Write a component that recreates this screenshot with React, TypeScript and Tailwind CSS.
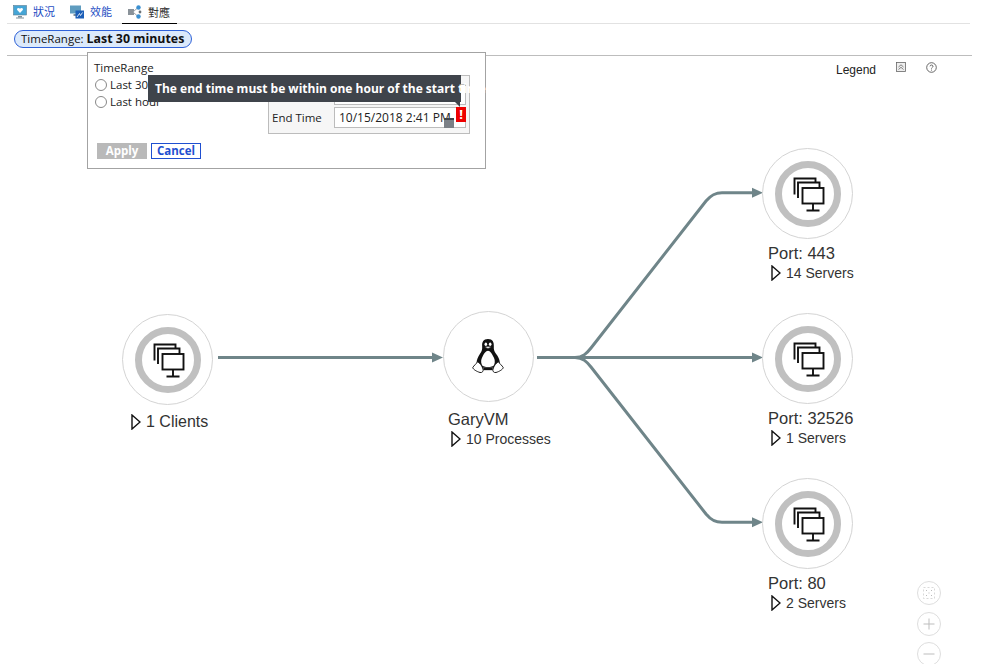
import React from "react";

const sans = "font-['Liberation_Sans',Arial,sans-serif]";

function MonitorsIcon() {
    return (
        <svg width="42" height="42" viewBox="0 0 42 42" fill="none" stroke="#111" strokeWidth="1.9">
            <path d="M7.5 21.5 V5.5 H28.5 V9.5" />
            <path d="M11 25 V9.5 H32.5 V15" />
            <rect x="15.5" y="15" width="21" height="15.5" fill="#fff" />
            <path d="M26 30.5 V37.5 M19.5 37.5 H32.5" />
        </svg>
    );
}

function Tux() {
    return (
        <svg width="32" height="37" viewBox="0 0 34 38" className="mr-[2px]">
            <path d="M17 0.5 C12 0.5 10.5 4 10.8 8 C11 11.5 10.5 13 8.5 16 C6.2 19.5 4.6 23 5 26 L8 31 L26 31 L29.5 26 C29.8 23 27.6 18.5 25.5 16 C23.5 13.5 23 11.5 23.2 8 C23.4 4 22 0.5 17 0.5 Z" fill="#111" />
            <path d="M17 13 C14.5 13.5 13 15.5 11.5 18.5 C9.8 21.5 9 24.5 10.5 28 C12.5 31 21.5 31 23.5 28 C25 24.5 24 21 22.3 18.5 C20.8 15.5 19.5 13.5 17 13 Z" fill="#fff" />
            <ellipse cx="14.7" cy="6" rx="1.4" ry="1.9" fill="#fff" />
            <ellipse cx="19.3" cy="6" rx="1.4" ry="1.9" fill="#fff" />
            <path d="M13.4 9 Q17 7.4 20.6 9 Q17 12 13.4 9 Z" fill="#fff" stroke="#111" strokeWidth="0.6" />
            <path d="M6 24.5 C4.5 27 2 28.5 0.8 30.8 C1 32.5 5 35 8.5 36 C11 36.5 12.3 34.5 11.7 32.5 C10.8 29 8.5 26 6 24.5 Z" fill="#fff" stroke="#111" strokeWidth="1" />
            <path d="M28 24.5 C29.5 27 32 28.5 33.2 30.8 C33 32.5 29 35 25.5 36 C23 36.5 21.7 34.5 22.3 32.5 C23.2 29 25.5 26 28 24.5 Z" fill="#fff" stroke="#111" strokeWidth="1" />
            <path d="M12 33.5 H22 V31 H12 Z" fill="#111" />
        </svg>
    );
}

function Expander() {
    return (
        <svg width="10" height="16" viewBox="0 0 10 16" fill="#fff" stroke="#111" strokeWidth="1.4" className="shrink-0">
            <path d="M1 1 L9 8 L1 15 Z" />
        </svg>
    );
}

type NodeProps = {
    className: string;
    labelClass: string;
    subClass?: string;
    title?: string;
    sub: string;
    linux?: boolean;
};

function MapNode({ className, labelClass, subClass = "text-[14px] ml-[3px]", title, sub, linux }: NodeProps) {
    return (
        <div className={`absolute flex flex-col ${className}`}>
            <div className="w-[91px] h-[91px] rounded-full border border-[#d4d4d4] bg-white flex items-center justify-center">
                {linux ? (
                    <Tux />
                ) : (
                    <div className="w-[66px] h-[66px] rounded-full border-[7px] border-[#c0c0c0] flex items-center justify-center">
                        <MonitorsIcon />
                    </div>
                )}
            </div>
            <div className={`${labelClass} ${sans} text-[#333] whitespace-nowrap`}>
                {title && <div className="text-[16.5px] leading-[20px]">{title}</div>}
                <div className={`flex items-center gap-[5px] leading-[20px] ${subClass}`}>
                    <Expander />
                    {sub}
                </div>
            </div>
        </div>
    );
}

function Tabs() {
    return (
        <div className="h-[24px] ml-[7px] mr-[17px] border-b border-[#e2e2e2] flex items-end text-[11px] font-['Noto_Sans_CJK_TC',sans-serif]">
            <div className="flex items-center gap-[6px] ml-[6px] h-[23px] text-[#1f4fc4]">
                <svg width="14" height="14" viewBox="0 0 14 14">
                    <rect x="0.5" y="0.5" width="13" height="9.5" fill="#45a5d6" stroke="#5a7d92" strokeWidth="0.6" />
                    <path d="M7 8 L4.2 5 C3.4 3.4 5.6 2.2 7 3.8 C8.4 2.2 10.6 3.4 9.8 5 Z" fill="#fff" />
                    <path d="M5 11 H9 V12.5 H5 Z" fill="#7f8f99" />
                    <path d="M3 12.5 H11 V13.5 H3 Z" fill="#7f8f99" />
                </svg>
                狀況
            </div>
            <div className="flex items-center gap-[6px] ml-[15px] h-[23px] text-[#1f4fc4]">
                <svg width="14" height="14" viewBox="0 0 14 14">
                    <rect x="0" y="0.5" width="11" height="8" fill="#5f9cbf" />
                    <path d="M3.5 9 H7 V11 H3.5 Z" fill="#7f8f99" />
                    <rect x="5.5" y="5.5" width="8.5" height="8" fill="#1c5fb8" />
                    <path d="M7 12 L9.5 8.5 L10.5 10.5 L12.5 7.5" stroke="#fff" strokeWidth="0.8" fill="none" />
                </svg>
                效能
            </div>
            <div className="flex items-center gap-[6px] ml-[10px] w-[55px] h-[23px] pl-[6px] border-b border-black -mb-px text-[#333]">
                <svg width="14" height="14" viewBox="0 0 14 14">
                    <rect x="0" y="4" width="6" height="6" fill="#8a9299" />
                    <path d="M5 7 L10 2.5 M5 7 L10 11.5" stroke="#9aa2a8" strokeWidth="1" />
                    <circle cx="10.5" cy="2.5" r="2.2" fill="#3a8fd0" />
                    <circle cx="12" cy="7" r="1.4" fill="#6a7278" />
                    <circle cx="10.5" cy="11.5" r="2.2" fill="#3a8fd0" />
                </svg>
                對應
            </div>
        </div>
    );
}

function TimePopup() {
    return (
        <div className="absolute left-[87px] top-[52px] w-[399px] h-[117px] border border-[#a3a3a3] bg-white flex items-start font-['Open_Sans','Liberation_Sans',sans-serif] text-[11.5px] text-[#222]">
            <div className="w-[180px] pl-[6px] pt-[8px] flex flex-col">
                <div className="leading-[14px]">TimeRange</div>
                <div className="ml-[1px] mt-[3px] flex flex-col gap-[3px]">
                    <label className="flex items-center gap-[3px] h-[14px]">
                        <span className="w-[12px] h-[12px] rounded-full border border-[#888] bg-white" />
                        Last 30 minutes
                    </label>
                    <label className="flex items-center gap-[3px] h-[14px]">
                        <span className="w-[12px] h-[12px] rounded-full border border-[#888] bg-white" />
                        Last hour
                    </label>
                </div>
                <div className="flex gap-[4px] ml-[3px] mt-[34px]">
                    <div className="w-[50px] h-[16px] bg-[#b9b9b9] text-white font-bold text-center leading-[16px]">Apply</div>
                    <div className="w-[50px] h-[16px] border border-[#1f4fd0] text-[#1f4fd0] font-bold text-center leading-[14px]">Cancel</div>
                </div>
            </div>

            <div className="mt-[22px] w-[202px] h-[59px] border border-[#bcbcbc] bg-[#f6f6f6] flex flex-col items-end gap-[2px] pt-[8px] pr-[3px]">
                <div className="w-[132px] h-[21px] border border-[#bcbcbc] bg-white" />
                <div className="flex items-center">
                    <div className="w-[62px]">End Time</div>
                    <div className="relative w-[132px] h-[21px] border border-[#bcbcbc] bg-white pl-[4px] leading-[19px] text-[12px] whitespace-nowrap">
                        10/15/2018 2:41 PM
                        <div className="absolute left-[109px] top-[10px] w-[10px] h-[10px] bg-[#7b8086] border-t-2 border-[#3f444b]" />
                        <div className="absolute left-[121px] -top-px w-[10px] h-[15px] bg-[#ee0000] text-white font-bold text-center text-[13px] leading-[15px]">!</div>
                    </div>
                </div>
            </div>

            <div className="absolute left-[60px] top-[22px] w-[313px] h-[27px] bg-[#3f444b] pl-[7px] text-white font-bold text-[12px] leading-[27px] whitespace-nowrap">
                The end time must be within one hour of the start time
                <div className="absolute right-[1px] -bottom-[5px] w-0 h-0 border-l-[5px] border-l-transparent border-t-[5px] border-t-[#3f444b]" />
            </div>
        </div>
    );
}

function ZoomButton({ children }: { children: React.ReactNode }) {
    return (
        <div className="w-[24px] h-[24px] rounded-full border border-[#dedede] bg-white flex items-center justify-center">
            {children}
        </div>
    );
}

export default function App() {
    const edge = "#6f8589";

    return (
        <div className="relative w-[987px] h-[664px] overflow-hidden bg-white">
            <Tabs />
            <div className="ml-[14px] mt-[6px] w-[178px] h-[18px] rounded-full border border-[#2f62d8] bg-[#dceafb] pl-[6px] font-['Open_Sans','Liberation_Sans',sans-serif] text-[11.5px] leading-[16px] text-[#111] whitespace-nowrap">
                TimeRange: <span className="font-bold text-[12.4px]">Last 30 minutes</span>
            </div>
            <div className="ml-[7px] mr-[15px] mt-[7px] border-b border-[#bdbdbd]" />

            <svg className="absolute left-0 top-0" width="987" height="664" fill="none" stroke={edge} strokeWidth="3">
                <path d="M218 357.5 H433" />
                <path d="M443 357.5 L432 352.5 V362.5 Z" fill={edge} stroke="none" />
                <path d="M537 357.5 H753" />
                <path d="M763 357.5 L752 352.5 V362.5 Z" fill={edge} stroke="none" />
                <path d="M575 357.5 C583 357.5 587 353 591 348 L706 201 C711 195 715 192.7 722 192.7 H753" />
                <path d="M763 192.7 L752 187.7 V197.7 Z" fill={edge} stroke="none" />
                <path d="M575 357.5 C583 357.5 587 362 591 367 L706 514 C711 520 715 522.3 722 522.3 H753" />
                <path d="M763 522.3 L752 517.3 V527.3 Z" fill={edge} stroke="none" />
            </svg>

            <MapNode className="left-[122px] top-[314px]" labelClass="mt-[7px] pl-[9px]" subClass="text-[16px]" sub="1 Clients" />
            <MapNode className="left-[443px] top-[311px]" labelClass="mt-[7px] pl-[5px]" title="GaryVM" sub="10 Processes" linux />
            <MapNode className="left-[762px] top-[148px]" labelClass="mt-[4px] pl-[6px]" title="Port: 443" sub="14 Servers" />
            <MapNode className="left-[762px] top-[313px]" labelClass="mt-[4px] pl-[6px]" title="Port: 32526" sub="1 Servers" />
            <MapNode className="left-[762px] top-[478px]" labelClass="mt-[4px] pl-[6px]" title="Port: 80" sub="2 Servers" />

            <TimePopup />

            <div className="absolute left-[836px] top-[62px] flex items-start gap-[20px]">
                <div className={`w-[40px] mt-[1px] ${sans} text-[12px] leading-[15px] text-[#222]`}>Legend</div>
                <svg width="10" height="10" viewBox="0 0 10 10" fill="none" stroke="#666" strokeWidth="0.8">
                    <rect x="0.5" y="0.5" width="9" height="9" fill="#eee" />
                    <path d="M2.5 5 L5 2.8 L7.5 5 M2.5 7.5 L5 5.3 L7.5 7.5" />
                </svg>
                <svg width="11" height="11" viewBox="0 0 11 11" fill="none" stroke="#444" strokeWidth="0.8">
                    <circle cx="5.5" cy="5.5" r="4.8" />
                    <path d="M4 4.3 C4 2.6 7 2.6 7 4.3 C7 5.4 5.5 5.4 5.5 6.6 M5.5 7.6 V8.6" />
                </svg>
            </div>

            <div className="absolute left-[917px] top-[581px] flex flex-col gap-[6.5px]">
                <ZoomButton>
                    <svg width="12" height="12" viewBox="0 0 12 12" fill="none" stroke="#cfcfcf" strokeWidth="0.8">
                        <rect x="0.5" y="0.5" width="11" height="11" strokeDasharray="2 2" />
                        <path d="M3.5 3 V4 M8.5 3 V4 M6 5.5 V6.5 M3.5 8 V9 M8.5 8 V9" stroke="#aaa" />
                    </svg>
                </ZoomButton>
                <ZoomButton>
                    <svg width="12" height="12" viewBox="0 0 12 12" stroke="#bdbdbd" strokeWidth="1">
                        <path d="M0.5 6 H11.5 M6 0.5 V11.5" />
                    </svg>
                </ZoomButton>
                <ZoomButton>
                    <svg width="12" height="12" viewBox="0 0 12 12" stroke="#bdbdbd" strokeWidth="1">
                        <path d="M0.5 6 H11.5" />
                    </svg>
                </ZoomButton>
            </div>
        </div>
    );
}
